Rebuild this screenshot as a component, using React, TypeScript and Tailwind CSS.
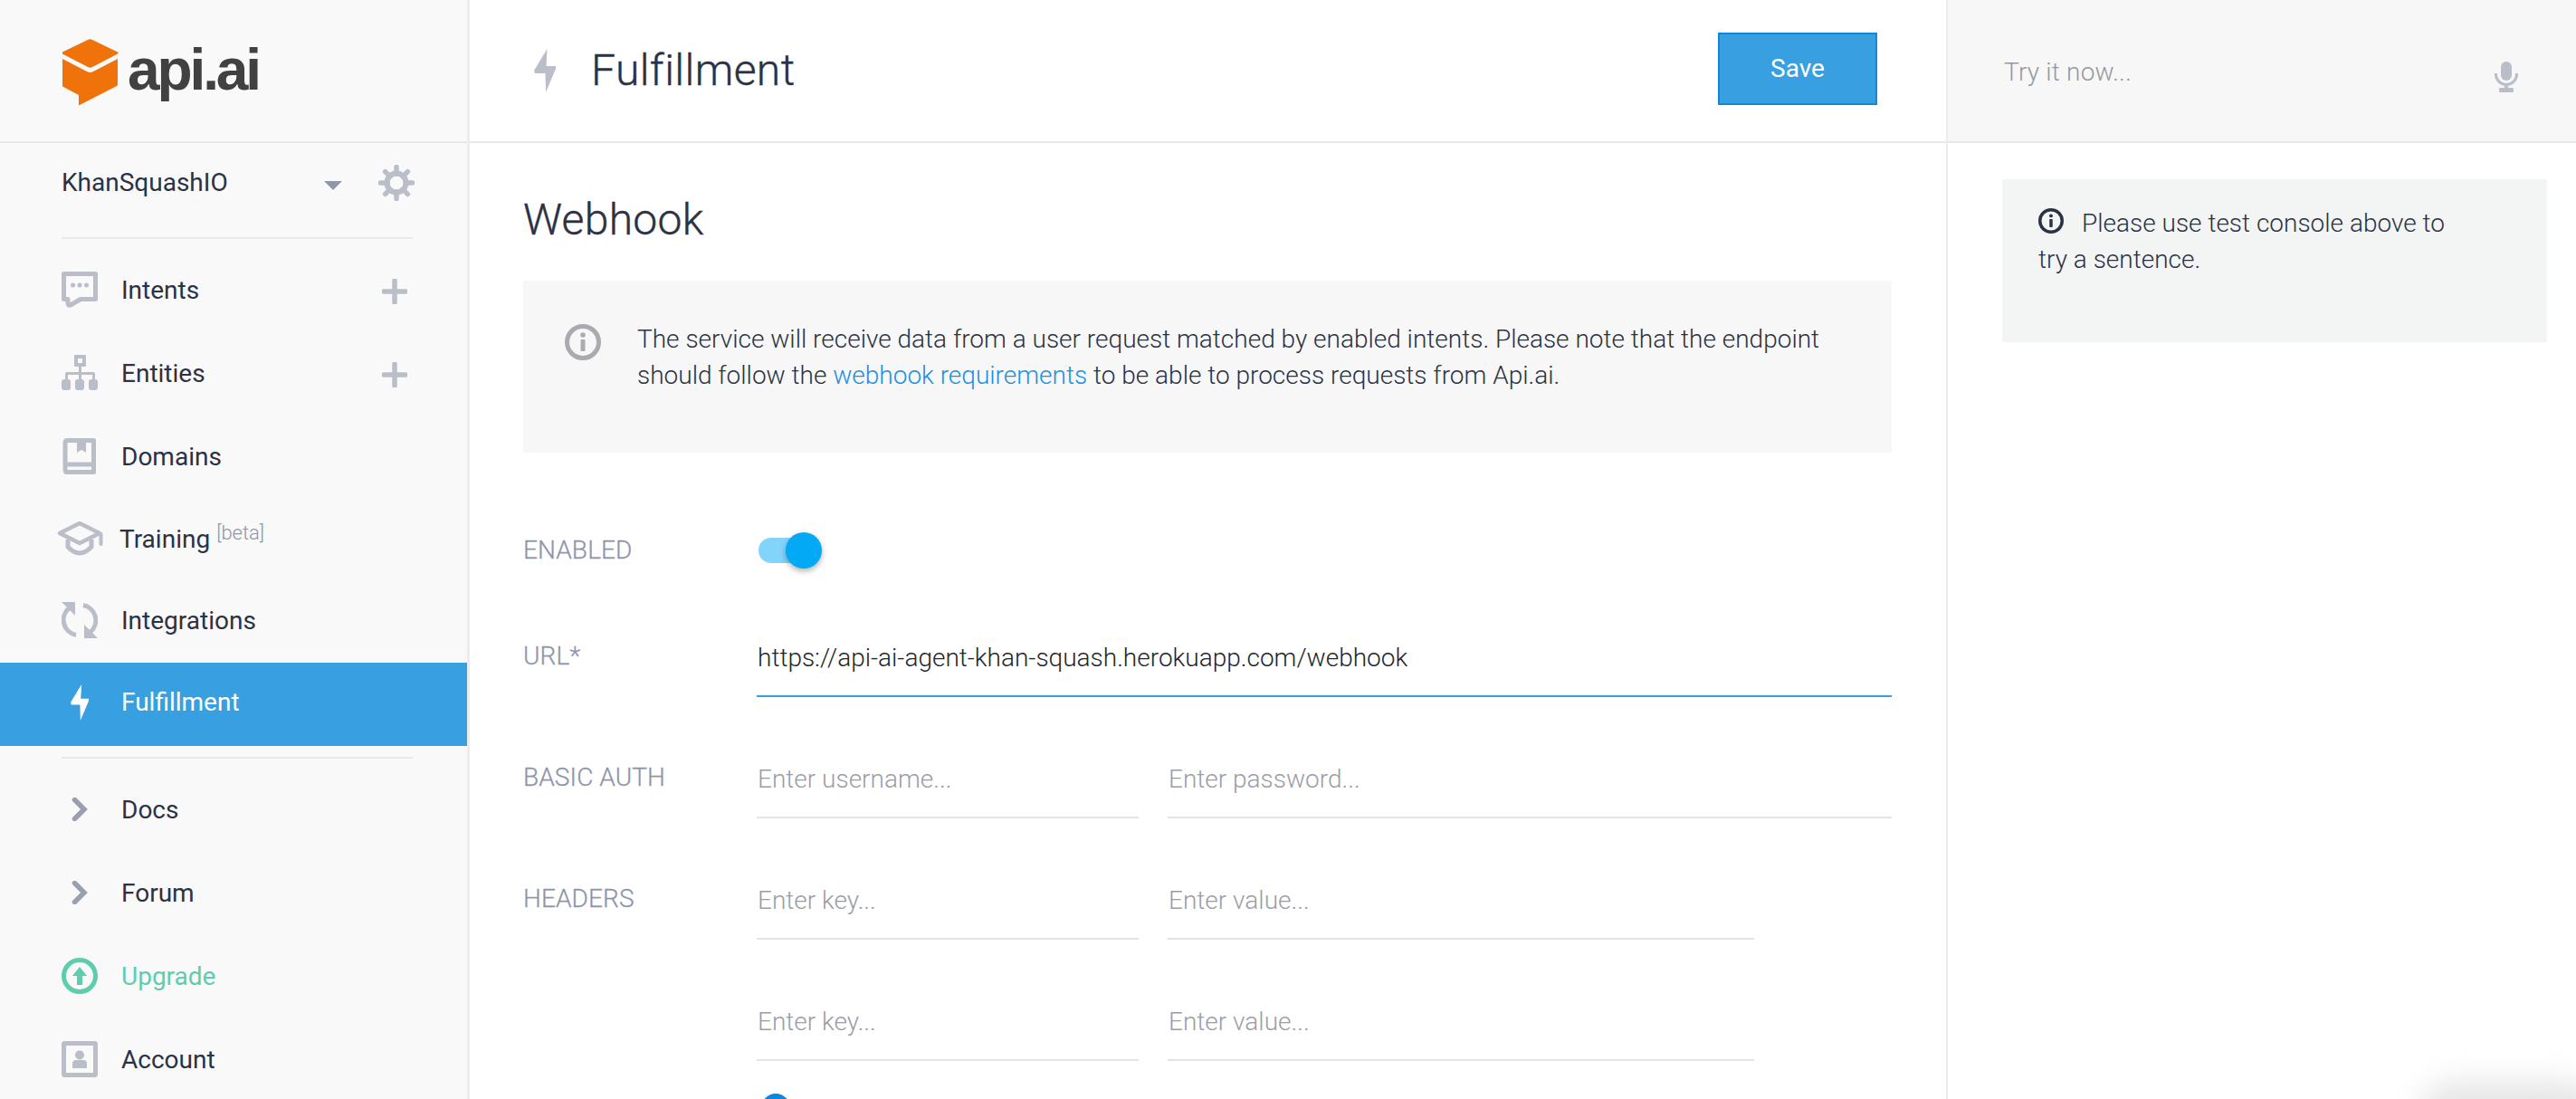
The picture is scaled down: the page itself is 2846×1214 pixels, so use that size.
import type { ReactNode } from 'react'

const iconGray = '#b9bec8'

function Logo() {
  return (
    <div className="flex items-center">
      <svg width="62" height="74" viewBox="0 0 62 74" className="shrink-0">
        <path
          d="M28 1 a5 5 0 0 1 5 0 L60 14 a1.5 1.5 0 0 1 0 3 L33 31 a5 5 0 0 1 -5 0 L1 17 a1.5 1.5 0 0 1 0 -3 Z"
          fill="#f0720a"
        />
        <path
          d="M0 22 L27 36 a7 7 0 0 0 7 0 L61 22 L61 50 a2 2 0 0 1 -1 2 L18 73.5 L18 62 L1 53 a2 2 0 0 1 -1 -2 Z"
          fill="#f0720a"
        />
      </svg>
      <span className="ml-[10px] mb-[6px] font-['Liberation_Sans'] font-bold text-[64px] leading-none tracking-[-3.1px] text-[#414141]">
        api.ai
      </span>
    </div>
  )
}

function Bolt({ color, className }: { color: string; className?: string }) {
  return (
    <svg viewBox="0 0 24 48" className={className} fill={color}>
      <path d="M14.5 0 L13.5 19 L24 19 L24 22 L13 48 L12.5 27 L1 27 L0 24 Z" />
    </svg>
  )
}

function IntentsIcon() {
  return (
    <svg width="40" height="40" viewBox="0 0 40 40" className="shrink-0">
      <path
        d="M2.5 2.5 H37.5 V30.5 H21 L10 37 Q7 38 7 35 V30.5 H2.5 Z"
        fill="none"
        stroke={iconGray}
        strokeWidth="5"
        strokeLinejoin="round"
      />
      <circle cx="12.5" cy="15" r="2.5" fill={iconGray} />
      <circle cx="20" cy="15" r="2.5" fill={iconGray} />
      <circle cx="27.5" cy="15" r="2.5" fill={iconGray} />
    </svg>
  )
}

function EntitiesIcon() {
  return (
    <svg width="40" height="40" viewBox="0 0 40 40" fill={iconGray} className="shrink-0">
      <path
        fillRule="evenodd"
        d="M14 1 Q14 0 15 0 H26 Q27 0 27 1 V12 Q27 13 26 13 H22 V19 H35 Q37 19 37 21 V27 H34 V22 H22 V27 H19 V22 H7 V27 H4 V21 Q4 19 6 19 H19 V13 H15 Q14 13 14 12 Z M18 4 V9 H23 V4 Z"
      />
      <rect x="0" y="27" width="10" height="12" rx="3" />
      <rect x="15" y="27" width="10" height="12" rx="3" />
      <rect x="30" y="27" width="10" height="12" rx="3" />
    </svg>
  )
}

function DomainsIcon() {
  return (
    <svg width="40" height="40" viewBox="0 0 40 40" className="shrink-0">
      <path
        d="M5.5 2.5 H35.5 V37.5 H5.5 Q4 37.5 4 34 V6 Q4 2.5 5.5 2.5 Z"
        fill="none"
        stroke={iconGray}
        strokeWidth="5"
        strokeLinejoin="round"
      />
      <path d="M5 29 H36" stroke={iconGray} strokeWidth="5" />
      <path d="M17 3 H27 V16 L22 13 L17 16 Z" fill={iconGray} />
    </svg>
  )
}

function TrainingIcon() {
  return (
    <svg width="52" height="38" viewBox="0 0 52 38" className="shrink-0">
      <path
        d="M26 2 L48 13 L26 24 L4 13 Z"
        fill="none"
        stroke={iconGray}
        strokeWidth="4.5"
        strokeLinejoin="round"
      />
      <path
        d="M13 20 V28 Q26 42 39 28 V20"
        fill="none"
        stroke={iconGray}
        strokeWidth="5"
      />
      <path d="M49.5 14 V25" stroke={iconGray} strokeWidth="4" strokeLinecap="round" />
    </svg>
  )
}

function IntegrationsIcon() {
  return (
    <svg width="40" height="40" viewBox="0 0 40 40" className="shrink-0">
      <path d="M24 3.5 A17 17 0 0 1 32 33" fill="none" stroke={iconGray} strokeWidth="5" />
      <path d="M16 36.5 A17 17 0 0 1 8 7" fill="none" stroke={iconGray} strokeWidth="5" />
      <path d="M0 0 H15 L15 15 Z" fill={iconGray} />
      <path d="M40 40 H25 L25 25 Z" fill={iconGray} />
    </svg>
  )
}

function Chevron() {
  return (
    <svg width="40" height="26" viewBox="0 0 40 26" className="shrink-0">
      <path
        d="M14.5 2.5 L25 13 L14.5 23.5"
        fill="none"
        stroke="#9a9fb0"
        strokeWidth="5.5"
        strokeLinecap="round"
        strokeLinejoin="miter"
      />
    </svg>
  )
}

function UpgradeIcon() {
  return (
    <svg width="40" height="40" viewBox="0 0 40 40" className="shrink-0">
      <circle cx="20" cy="20" r="17.5" fill="none" stroke="#5fcdad" strokeWidth="5" />
      <path d="M20 10 L28 20 H23 V30 H17 V20 H12 Z" fill="#5fcdad" />
    </svg>
  )
}

function AccountIcon() {
  return (
    <svg width="40" height="40" viewBox="0 0 40 40" className="shrink-0">
      <rect x="2.5" y="2.5" width="35" height="35" rx="1" fill="none" stroke={iconGray} strokeWidth="5" />
      <circle cx="20" cy="15.5" r="5" fill={iconGray} />
      <path d="M12 30 V25 Q12 21 16 21 H24 Q28 21 28 25 V30 Z" fill={iconGray} />
    </svg>
  )
}

function Plus() {
  return (
    <svg width="28" height="28" viewBox="0 0 28 28" className="mt-1 shrink-0">
      <path d="M14 2 V26 M2 14 H26" stroke={iconGray} strokeWidth="5.5" strokeLinecap="round" />
    </svg>
  )
}

function Gear() {
  const teeth = [0, 45, 90, 135, 180, 225, 270, 315]
  return (
    <svg width="40" height="40" viewBox="0 0 40 40" className="shrink-0">
      {teeth.map((deg) => (
        <path
          key={deg}
          d="M20 2.5 V10"
          stroke={iconGray}
          strokeWidth="5.5"
          strokeLinecap="round"
          transform={`rotate(${deg} 20 20)`}
        />
      ))}
      <circle cx="20" cy="20" r="10.5" fill="none" stroke={iconGray} strokeWidth="6" />
    </svg>
  )
}

function InfoIcon({ size, color, className }: { size: number; color: string; className?: string }) {
  return (
    <svg width={size} height={size} viewBox="0 0 40 40" className={className}>
      <circle cx="20" cy="20" r="17.5" fill="none" stroke={color} strokeWidth="5" />
      <rect x="17.5" y="17" width="5" height="13" rx="1" fill={color} />
      <circle cx="20" cy="12" r="2.8" fill={color} />
    </svg>
  )
}

function Mic() {
  return (
    <svg width="26" height="34" viewBox="0 0 26 34">
      <rect x="7" y="0" width="12" height="21" rx="6" fill={iconGray} />
      <path d="M1.5 13 V14 A11.5 11.5 0 0 0 24.5 14 V13" fill="none" stroke={iconGray} strokeWidth="3" />
      <rect x="11" y="25" width="4" height="6" fill={iconGray} />
      <rect x="5" y="29" width="16" height="5" rx="1" fill={iconGray} />
    </svg>
  )
}

function NavItem({
  icon,
  label,
  right,
  className = 'h-[92px]',
}: {
  icon: ReactNode
  label: ReactNode
  right?: ReactNode
  className?: string
}) {
  return (
    <div className={`flex items-center pl-[68px] pr-[66px] ${className}`}>
      <span className="w-[40px] flex justify-center shrink-0">{icon}</span>
      <span className="ml-[26px] pt-[2px] flex-1 text-[28px] text-[#2b3244]">{label}</span>
      {right}
    </div>
  )
}

function Field({ placeholder, className = 'flex-1' }: { placeholder: string; className?: string }) {
  return (
    <input
      readOnly
      placeholder={placeholder}
      className={`h-[86px] border-b-2 border-[#e1e3e6] pl-[1px] bg-transparent text-[28px] font-light outline-none placeholder:text-[#9b9da5] ${className}`}
    />
  )
}

function FormRow({ label, children, className = '' }: { label?: string; children: ReactNode; className?: string }) {
  return (
    <div className={`flex ${className}`}>
      <div className="w-[258px] h-[82px] flex items-center text-[28px] font-light tracking-[0.1px] [-webkit-text-stroke:0.3px_#8e95aa] text-[#8e95aa] shrink-0">
        {label}
      </div>
      <div className="flex-1 flex gap-[32px]">{children}</div>
    </div>
  )
}

export default function App() {
  return (
    <div className="relative flex w-[2846px] h-[1214px] overflow-hidden bg-white font-['Roboto',sans-serif]">
      <aside className="w-[519px] shrink-0 bg-[#f9f9f9] border-r-[3px] border-[#ececec]">
        <div className="h-[158px] border-b-2 border-[#e8e8e8] pl-[69px] pt-[43px]">
          <Logo />
        </div>
        <div className="h-[104px] flex items-center pb-[16px] pl-[68px] pr-[58px]">
          <span className="flex-1 text-[28px] text-[#2b3244]">KhanSquashIO</span>
          <span className="mr-[40px] mt-[6px] w-0 h-0 border-x-[10px] border-x-transparent border-t-[10px] border-t-[#9197a8]" />
          <Gear />
        </div>
        <div className="ml-[68px] mr-[60px] h-[2px] bg-[#e8e8e8]" />
        <div className="h-[10px]" />
        <NavItem icon={<IntentsIcon />} label="Intents" right={<Plus />} />
        <NavItem icon={<EntitiesIcon />} label="Entities" right={<Plus />} />
        <NavItem icon={<DomainsIcon />} label="Domains" />
        <NavItem
          className="h-[90px]"
          icon={<TrainingIcon />}
          label={
            <span className="-ml-[2px]">
              Training
              <span className="ml-[7px] text-[22px] font-light text-[#8e95aa] align-[9px] leading-none">[beta]</span>
            </span>
          }
        />
        <NavItem className="h-[92px] pb-[2px]" icon={<IntegrationsIcon />} label="Integrations" />
        <div className="h-[92px] pb-[4px] flex items-center pl-[68px] bg-[#389fe0] -mr-[3px] w-[516px]">
          <span className="w-[40px] flex justify-center">
            <Bolt color="#ffffff" className="w-[20px] h-[40px]" />
          </span>
          <span className="ml-[26px] text-[28px] text-white">Fulfillment</span>
        </div>
        <div className="mt-[12px] ml-[68px] mr-[60px] h-[2px] bg-[#e8e8e8]" />
        <div className="h-[10px]" />
        <NavItem icon={<Chevron />} label="Docs" />
        <NavItem icon={<Chevron />} label="Forum" />
        <NavItem icon={<UpgradeIcon />} label={<span className="text-[#5fcdad]">Upgrade</span>} />
        <NavItem icon={<AccountIcon />} label="Account" />
      </aside>

      <main className="w-[1633px] shrink-0 border-r-2 border-[#ececec]">
        <header className="h-[158px] border-b-2 border-[#e8e8e8] flex items-center pl-[71px] pr-[76px]">
          <Bolt color={iconGray} className="w-[24px] h-[48px]" />
          <h1 className="ml-[39px] flex-1 text-[48px] font-light tracking-[0.4px] [-webkit-text-stroke:0.4px_#2b3244] text-[#2b3244]">
            Fulfillment
          </h1>
          <button className="w-[176px] h-[80px] mb-[4px] bg-[#389fe0] border-2 border-[#0f88dc] text-white text-[28px]">
            Save
          </button>
        </header>
        <div className="pl-[59px] pr-[60px]">
          <h2 className="mt-[52px] h-[66px] leading-[66px] text-[48px] font-light tracking-[0.3px] [-webkit-text-stroke:0.4px_#2b3244] text-[#2b3244]">
            Webhook
          </h2>
          <div className="mt-[34px] h-[190px] bg-[#f7f7f7] flex pl-[46px] pt-[45px]">
            <InfoIcon size={40} color="#aaabb0" className="mt-[3px] shrink-0" />
            <p className="ml-[40px] text-[28px] leading-[40px] font-light text-[#2b3244]">
              The service will receive data from a user request matched by enabled intents. Please note that the endpoint
              <br />
              should follow the <a className="text-[#1a8fe3]">webhook requirements</a> to be able to process requests from
              Api.ai.
            </p>
          </div>

          <FormRow label="ENABLED" className="mt-[67px]">
            <div className="relative mt-[27px] ml-[2px] w-[60px] h-[28px] rounded-full bg-[#82d4fd]">
              <span className="absolute left-[30px] -top-[6px] w-[40px] h-[40px] rounded-full bg-[#03a9f4] shadow-[0_3px_6px_rgba(0,0,0,0.3)]" />
            </div>
          </FormRow>
          <FormRow label="URL*" className="mt-[35px]">
            <input
              readOnly
              defaultValue="https://api-ai-agent-khan-squash.herokuapp.com/webhook"
              className="flex-1 h-[86px] border-b-2 border-[#389fe0] pl-[1px] bg-transparent text-[28px] font-light text-[#24262c] outline-none"
            />
          </FormRow>
          <FormRow label="BASIC AUTH" className="mt-[48px]">
            <Field placeholder="Enter username..." className="w-[422px]" />
            <Field placeholder="Enter password..." />
          </FormRow>
          <FormRow label="HEADERS" className="mt-[48px]">
            <Field placeholder="Enter key..." className="w-[422px]" />
            <Field placeholder="Enter value..." className="w-[648px]" />
          </FormRow>
          <FormRow className="mt-[48px]">
            <Field placeholder="Enter key..." className="w-[422px]" />
            <Field placeholder="Enter value..." className="w-[648px]" />
          </FormRow>
          <div className="mt-[36px] ml-[263px] w-[32px] h-[32px] rounded-full bg-[#0f88dc]" />
        </div>
      </main>

      <section className="flex-1 min-w-0">
        <div className="h-[158px] border-b-2 border-[#e8e8e8] bg-[#f7f7f7] flex items-start pt-[59px] pl-[62px] pr-[64px]">
          <input
            readOnly
            placeholder="Try it now..."
            className="flex-1 bg-transparent text-[28px] font-light tracking-[0.2px] outline-none placeholder:text-[#96989e]"
          />
          <span className="mt-[9px]">
            <Mic />
          </span>
        </div>
        <div className="mt-[40px] ml-[60px] w-[602px] h-[180px] bg-[#f3f5f5] px-[40px] pt-[29px] text-[28px] leading-[40px] font-light text-[#2b3244]">
          <InfoIcon size={28} color="#2b3244" className="inline-block mr-[20px] align-[-2px]" />
          Please use test console above to
          <br />
          try a sentence.
        </div>
      </section>

      <div className="absolute left-[2673px] -bottom-[60px] w-[200px] h-[80px] rounded-full bg-[#e6e6e6] blur-[16px]" />
    </div>
  )
}
